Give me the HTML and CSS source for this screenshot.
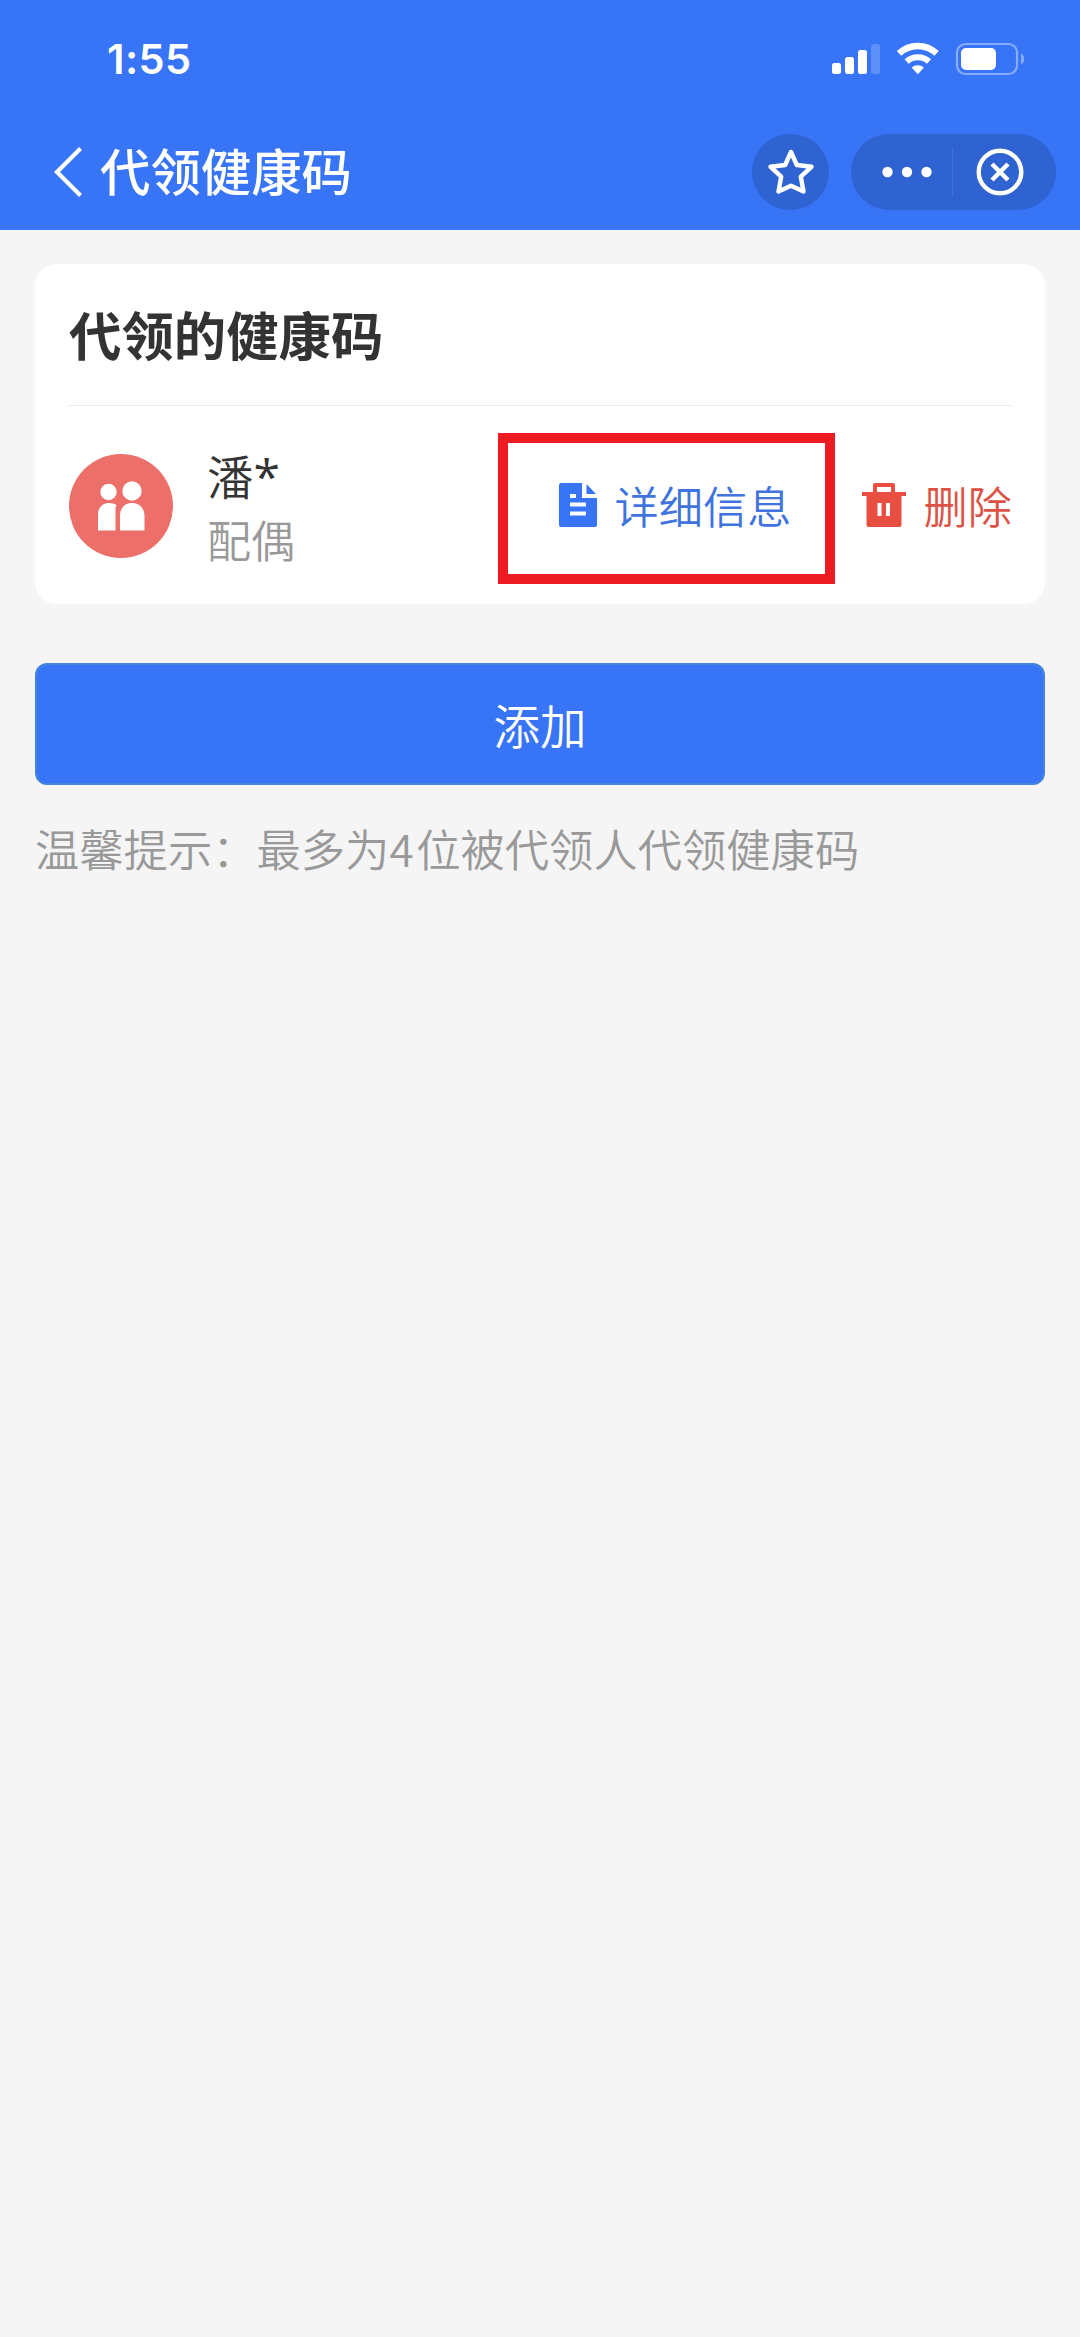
FILE: index.html
```
<!DOCTYPE html>
<html lang="zh-CN">

<head>
  <meta charset="UTF-8">
  <title>代领健康码</title>
  <meta name="viewport" content="width=device-width, initial-scale=1">
  <link rel="stylesheet" href="styles.css">
</head>

<body>
  <!-- Header -->
  <header>
    <div class="status-bar">
      <span class="time">1:55</span>
      <svg class="status-icons" width="194" height="34" viewBox="0 0 194 34" fill="#fff">
        <rect x="0" y="21" width="9" height="11" rx="2.5" />
        <rect x="13" y="15" width="9" height="17" rx="2.5" />
        <rect x="26" y="8" width="9" height="24" rx="2.5" />
        <rect x="39" y="2" width="9" height="30" rx="2.5" opacity=".2" />
        <g fill="none" stroke="#fff">
          <path d="M67 11.400a27.500 27.500 0 0 1 37.600 0" stroke-width="6.500" />
          <path d="M74.600 19.500a17 17 0 0 1 22.400 0" stroke-width="6" />
        </g>
        <path d="M79.700 25.500a9.500 9.500 0 0 1 12.200 0l-5.300 5.900q-.8.800-1.600 0z" />
        <rect x="125" y="2" width="60" height="30" rx="8.500" fill="none" stroke="#fff" stroke-width="2.200" opacity=".4" />
        <rect x="129" y="6" width="35" height="22" rx="5" />
        <path d="M189 11.500q3.200 1.500 3.200 5.500t-3.200 5.500z" opacity=".4" />
      </svg>
    </div>
    <div class="nav-bar">
      <svg class="back" width="30" height="50" viewBox="0 0 30 50" fill="none" stroke="#fff" stroke-width="4.200">
        <path d="M27.500 1.500L4 25l23.500 23.500" />
      </svg>
      <h1>代领健康码</h1>
      <div class="nav-btn">
        <svg width="48" height="48" viewBox="0 0 48 48" fill="none" stroke="#fff" stroke-width="4.400" stroke-linejoin="round">
          <path d="M24 4L29.800 17L44.500 18.800L33.800 28.700L36.500 43.500L24 37.800L11.500 43.500L14.200 28.700L3.500 18.800L18.200 17Z" />
        </svg>
      </div>
      <div class="nav-btn capsule">
        <svg width="50" height="12" viewBox="0 0 50 12" fill="#fff">
          <circle cx="5.500" cy="6" r="5.200" />
          <circle cx="25" cy="6" r="5.200" />
          <circle cx="44.500" cy="6" r="5.200" />
        </svg>
        <i class="line"></i>
        <svg width="48" height="48" viewBox="0 0 48 48" fill="none" stroke="#fff" stroke-width="4.400">
          <circle cx="24" cy="24" r="21.300" />
          <path d="M16 16l16 16M32 16L16 32" />
        </svg>
      </div>
    </div>
  </header>

  <main>
    <!-- Member list -->
    <section class="card">
      <h2>代领的健康码</h2>
      <div class="member">
        <svg class="avatar" width="104" height="104" viewBox="0 0 104 104">
          <circle cx="52" cy="52" r="52" fill="#ec6f69" />
          <g fill="#fff">
            <circle cx="39.500" cy="38" r="8.200" />
            <circle cx="63" cy="37" r="9.700" />
            <path d="M29 76.500V61c0-8 5-12 11-12 3 0 5.500.700 7.500 2-1 2-1 4-1 7v18.500z" />
            <path d="M51 76.500V62c0-8 5-13 12-13s12.500 5 12.500 13v14.500z" />
          </g>
        </svg>
        <div class="info">
          <p class="name">潘<span class="mask">*</span></p>
          <p class="relation">配偶</p>
        </div>
        <a class="detail">
          <svg width="38" height="44" viewBox="0 0 38 44" fill="#3875f6">
            <path fill-rule="evenodd" d="M2 0h21v15h15v27q0 2-2 2H2q-2 0-2-2V2q0-2 2-2zM11 11v4h6v-4zM11 19.500v4h16v-4zM11 28.500v4h16v-4z" />
            <path d="M27.500 1v10H37z" />
          </svg>
          <span>详细信息</span>
        </a>
        <a class="delete">
          <svg width="44" height="44" viewBox="0 0 44 44" fill="#e94f41">
            <path fill-rule="evenodd" d="M13 0h18q2 0 2 2v7h11v4h-4.500v29q0 2-2 2h-31q-2 0-2-2V13H0V9h11V2q0-2 2-2zM15 4v5h14V4zM15.500 20v13h4V20zM24 20v13h4V20z" />
          </svg>
          <span>删除</span>
        </a>
      </div>
    </section>

    <button class="add-btn">添加</button>
    <p class="tip">温馨提示：最多为<span class="num">4</span>位被代领人代领健康码</p>
  </main>
</body>

</html>
```
FILE: styles.css
```
* {
  box-sizing: border-box;
  margin: 0;
  padding: 0;
}

body {
  min-height: 100vh;
  background: #f5f5f5;
  font-family: "Noto Sans CJK SC", sans-serif;
  font-weight: 350;
  color: #333;
}

svg {
  display: block;
  flex-shrink: 0;
}

/* Header */
header {
  height: 230px;
  background: #3875f6;
  color: #fff;
}

.status-bar {
  display: flex;
  justify-content: space-between;
  height: 134px;
  padding: 42px 54px 0 107px;
}

.time {
  font-family: Inter, sans-serif;
  font-size: 41.5px;
  font-weight: 600;
  line-height: 35px;
  letter-spacing: .4px;
}

.nav-bar {
  display: flex;
  align-items: center;
  height: 76px;
  padding: 0 24px 0 53px;
}

.nav-bar h1 {
  flex: 1;
  margin-left: 17px;
  padding-bottom: 5px;
  font-size: 50.4px;
  font-weight: 500;
  line-height: 71px;
}

.nav-btn {
  display: flex;
  justify-content: center;
  align-items: center;
  width: 77px;
  height: 76px;
  border-radius: 38px;
  background: #2e63d1;
}

.capsule {
  width: 205px;
  margin-left: 22px;
  justify-content: flex-start;
  padding-left: 31px;
}

.capsule .line {
  width: 1px;
  height: 48px;
  margin: 0 23px 0 20px;
  background: #3f72dc;
}

/* Content */
main {
  padding: 34px 35px;
}

.card {
  height: 340px;
  padding: 0 32px;
  border-radius: 22px;
  background: #fff;
}

.card h2 {
  height: 142px;
  padding-left: 2px;
  border-bottom: 1px solid #ececec;
  font-size: 52.4px;
  font-weight: 700;
  line-height: 138px;
}

.member {
  display: flex;
  align-items: center;
  height: 198px;
  padding: 0 1px 0 2px;
}

.avatar {
  margin-top: 2px;
}

.info {
  flex: 1;
  padding: 3px 0 0 34px;
}

.name {
  font-size: 46.5px;
  line-height: 64px;
}

.name .mask {
  font-family: "Open Sans", sans-serif;
  font-size: 48px;
  font-weight: 400;
  line-height: 0;
  vertical-align: 1px;
}

.relation {
  font-size: 44px;
  line-height: 64px;
  color: #999;
}

.detail,
.delete {
  display: flex;
  align-items: center;
  font-size: 44.2px;
  line-height: 60px;
}

.detail svg,
.delete svg {
  margin-right: 18px;
}

.detail span,
.delete span {
  padding-bottom: 1px;
}

/* Red frame around the detail link */
.detail {
  width: 337px;
  height: 151px;
  margin-top: 6px;
  padding: 0 0 6px 51px;
  border: 10px solid #ed1c24;
  color: #3f74de;
}

.delete {
  margin-left: 27px;
  color: #dd5245;
}

.add-btn {
  display: block;
  width: 100%;
  height: 122px;
  margin-top: 59px;
  padding-bottom: 1px;
  border: 2px solid #4484dc;
  border-radius: 12px;
  background: #3875f6;
  color: #fff;
  font-family: inherit;
  font-size: 46.5px;
  font-weight: inherit;
}

.tip {
  margin-top: 30px;
  font-size: 44.3px;
  line-height: 66px;
  color: #999;
}

.num {
  letter-spacing: 2.5px;
}
```
